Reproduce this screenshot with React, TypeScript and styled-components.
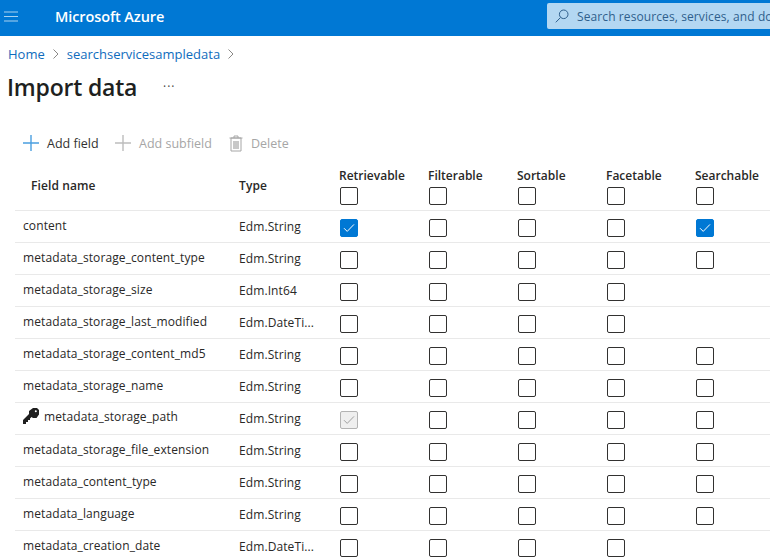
import styled, { createGlobalStyle } from "styled-components";

const GlobalStyle = createGlobalStyle`
  html, body {
    margin: 0;
    padding: 0;
    background: #fff;
    overflow: hidden;
  }
  body {
    font-family: "Open Sans", "Noto Sans", "Liberation Sans", sans-serif;
    color: #292827;
  }
`;

const Page = styled.div`
  width: 770px;
  height: 559px;
  overflow: hidden;
`;

const TopBar = styled.header`
  height: 36px;
  background: #0078d4;
  display: flex;
  align-items: center;
  color: #fff;
`;

const MenuButton = styled.div`
  flex: none;
  width: 55px;
  padding-left: 4px;
  padding-bottom: 4px;
  box-sizing: border-box;
  display: flex;
  align-items: center;
`;

const Brand = styled.div`
  flex: none;
  font-size: 14.5px;
  font-weight: 600;
  letter-spacing: -0.1px;
  width: 492px;
  padding-bottom: 4px;
`;

const SearchBox = styled.div`
  flex: none;
  align-self: flex-start;
  margin-top: 3px;
  width: 400px;
  height: 26px;
  background: #b3d7f2;
  border-radius: 2px;
  display: flex;
  align-items: center;
  gap: 8px;
  padding-left: 8px;
  box-sizing: border-box;
  font-size: 12px;
  letter-spacing: 0.1px;
  color: #2f5f8c;
  white-space: nowrap;
`;

const Breadcrumb = styled.nav`
  display: flex;
  align-items: center;
  height: 18px;
  margin: 9px 0 0 8px;
  font-size: 13px;
  letter-spacing: 0;
`;

const Crumb = styled.span`
  color: #0f6cbd;
`;

const Chevron = styled.svg`
  width: 8px;
  height: 10px;
  margin: 0 7px;
`;

const TitleRow = styled.div`
  display: flex;
  align-items: center;
  height: 36px;
  margin: 6px 0 0 7px;
`;

const Title = styled.h1`
  margin: 0;
  font-size: 23px;
  font-weight: 600;
  letter-spacing: -0.2px;
  color: #201f1e;
  width: 156px;
`;

const More = styled.span`
  font-size: 12px;
  line-height: 12px;
  letter-spacing: 1px;
  color: #444;
`;

const Toolbar = styled.div`
  display: flex;
  align-items: center;
  height: 20px;
  margin: 28px 0 0 23px;
  font-size: 12.5px;
`;

const ToolButton = styled.div<{ $disabled?: boolean; $gap: number; $width: number }>`
  display: flex;
  align-items: center;
  gap: ${({ $gap }) => $gap}px;
  width: ${({ $width }) => $width}px;
  flex: none;
  white-space: nowrap;
  color: ${({ $disabled }) => ($disabled ? "#a6a6a6" : "#323130")};
`;

const Table = styled.div`
  margin: 11px 0 0 15px;
  width: 800px;
`;

const Row = styled.div<{ $head?: boolean }>`
  display: grid;
  grid-template-columns: 216px 100px repeat(5, 89px);
  height: ${({ $head }) => ($head ? "46px" : "31px")};
  align-items: center;
  border-bottom: 1px solid #e9e9e9;
  font-size: 12px;
  letter-spacing: 0.1px;
`;

const NameCell = styled.div<{ $head?: boolean; $isKey?: boolean }>`
  display: flex;
  align-items: center;
  gap: 5px;
  padding-left: ${({ $head }) => ($head ? "16px" : "8px")};
  padding-bottom: ${({ $isKey }) => ($isKey ? "5px" : "3px")};
  font-weight: ${({ $head }) => ($head ? 600 : 400)};
  white-space: nowrap;
`;

const TypeCell = styled.div<{ $head?: boolean }>`
  padding-left: 8px;
  padding-bottom: ${({ $head }) => ($head ? "3px" : "0")};
  font-weight: ${({ $head }) => ($head ? 600 : 400)};
`;

const CheckCell = styled.div`
  padding-left: 9px;
  padding-top: 3px;
  display: flex;
  align-items: center;
`;

const HeadCell = styled.div`
  padding-left: 8px;
  padding-bottom: 2px;
  display: flex;
  flex-direction: column;
  align-items: flex-start;
  gap: 3px;
  font-weight: 600;
  line-height: 16px;
  white-space: nowrap;
  letter-spacing: 0;
  & > div {
    margin-left: 1px;
  }
`;

const Box = styled.div<{ $state: "off" | "on" | "locked" }>`
  width: 18px;
  height: 18px;
  box-sizing: border-box;
  border-radius: 2px;
  display: flex;
  align-items: center;
  justify-content: center;
  border: 1px solid
    ${({ $state }) =>
      $state === "on" ? "#0078d4" : $state === "locked" ? "#b3b3b3" : "#323130"};
  background: ${({ $state }) =>
    $state === "on" ? "#0078d4" : $state === "locked" ? "#efefef" : "#fff"};
`;

type State = "off" | "on" | "locked" | "none";

interface Field {
  name: string;
  type: string;
  checks: State[];
  isKey?: boolean;
}

const off: State = "off";
const all: State[] = [off, off, off, off, off];
const noSearch: State[] = [off, off, off, off, "none"];

const fields: Field[] = [
  { name: "content", type: "Edm.String", checks: ["on", off, off, off, "on"] },
  { name: "metadata_storage_content_type", type: "Edm.String", checks: all },
  { name: "metadata_storage_size", type: "Edm.Int64", checks: noSearch },
  { name: "metadata_storage_last_modified", type: "Edm.DateTi...", checks: noSearch },
  { name: "metadata_storage_content_md5", type: "Edm.String", checks: all },
  { name: "metadata_storage_name", type: "Edm.String", checks: all },
  { name: "metadata_storage_path", type: "Edm.String", checks: ["locked", off, off, off, off], isKey: true },
  { name: "metadata_storage_file_extension", type: "Edm.String", checks: all },
  { name: "metadata_content_type", type: "Edm.String", checks: all },
  { name: "metadata_language", type: "Edm.String", checks: all },
  { name: "metadata_creation_date", type: "Edm.DateTi...", checks: noSearch },
];

const headers = ["Retrievable", "Filterable", "Sortable", "Facetable", "Searchable"];

function Check({ color }: { color: string }) {
  return (
    <svg width="12" height="10" viewBox="0 0 12 10" fill="none">
      <path d="M1 5.2 4.2 8.4 11 1.4" stroke={color} strokeWidth="1" />
    </svg>
  );
}

function CheckBox({ state }: { state: Exclude<State, "none"> }) {
  return (
    <Box $state={state}>
      {state === "on" && <Check color="#fff" />}
      {state === "locked" && <Check color="#a0a0a0" />}
    </Box>
  );
}

function Plus({ color }: { color: string }) {
  return (
    <svg width="16" height="16" viewBox="0 0 16 16">
      <path d="M8 0v16M0 8h16" stroke={color} strokeWidth="1.4" />
    </svg>
  );
}

function Trash() {
  return (
    <svg width="14" height="17" viewBox="0 0 14 17" fill="none">
      <path d="M.5 3h13M5 3V1h4v2" stroke="#a6a6a6" />
      <path d="M2 3v13h10V3z" stroke="#a6a6a6" />
      <rect x="4" y="6" width="6" height="8" fill="#c8c8c8" />
    </svg>
  );
}

function KeyIcon() {
  return (
    <svg width="16" height="16" viewBox="0 0 16 16">
      <path fill="#1f1f1f" d="M10 0h4l2 2v4.500L13.500 10H10L8.500 9 7 10.500V12H5v2H3v2H0v-4l6-6V3z" />
      <circle cx="12.800" cy="3.200" r="1" fill="#fff" />
    </svg>
  );
}

export default function App() {
  return (
    <Page>
      <GlobalStyle />
      <TopBar>
        <MenuButton>
          <svg width="14" height="11" viewBox="0 0 14 11">
            <path d="M0 1h14M0 5.500h14M0 10h14" stroke="#a8d2f0" strokeWidth="1.200" />
          </svg>
        </MenuButton>
        <Brand>Microsoft Azure</Brand>
        <SearchBox>
          <svg width="14" height="14" viewBox="0 0 14 14" fill="none">
            <circle cx="8.700" cy="5.300" r="4.300" stroke="#2f5f8c" />
            <path d="M5.500 8.500.8 13.300" stroke="#2f5f8c" />
          </svg>
          Search resources, services, and docs (G+/)
        </SearchBox>
      </TopBar>

      <Breadcrumb>
        <Crumb>Home</Crumb>
        <Chevron viewBox="0 0 8 10" fill="none">
          <path d="M1.500.5 6 5 1.500 9.500" stroke="#8a8886" />
        </Chevron>
        <Crumb>searchservicesampledata</Crumb>
        <Chevron viewBox="0 0 8 10" fill="none">
          <path d="M1.500.5 6 5 1.500 9.500" stroke="#8a8886" />
        </Chevron>
      </Breadcrumb>

      <TitleRow>
        <Title>Import data</Title>
        <More>···</More>
      </TitleRow>

      <Toolbar>
        <ToolButton $gap={8} $width={92}>
          <Plus color="#4a9fe0" />
          Add field
        </ToolButton>
        <ToolButton $disabled $gap={8} $width={114}>
          <Plus color="#bdbdbd" />
          Add subfield
        </ToolButton>
        <ToolButton $disabled $gap={8} $width={70}>
          <Trash />
          Delete
        </ToolButton>
      </Toolbar>

      <Table>
        <Row $head>
          <NameCell $head>Field name</NameCell>
          <TypeCell $head>Type</TypeCell>
          {headers.map((label) => (
            <HeadCell key={label}>
              {label}
              <CheckBox state="off" />
            </HeadCell>
          ))}
        </Row>
        {fields.map((field) => (
          <Row key={field.name}>
            <NameCell $isKey={field.isKey}>
              {field.isKey && <KeyIcon />}
              {field.name}
            </NameCell>
            <TypeCell>{field.type}</TypeCell>
            {field.checks.map((state, i) => (
              <CheckCell key={i}>
                {state !== "none" && <CheckBox state={state} />}
              </CheckCell>
            ))}
          </Row>
        ))}
      </Table>
    </Page>
  );
}
